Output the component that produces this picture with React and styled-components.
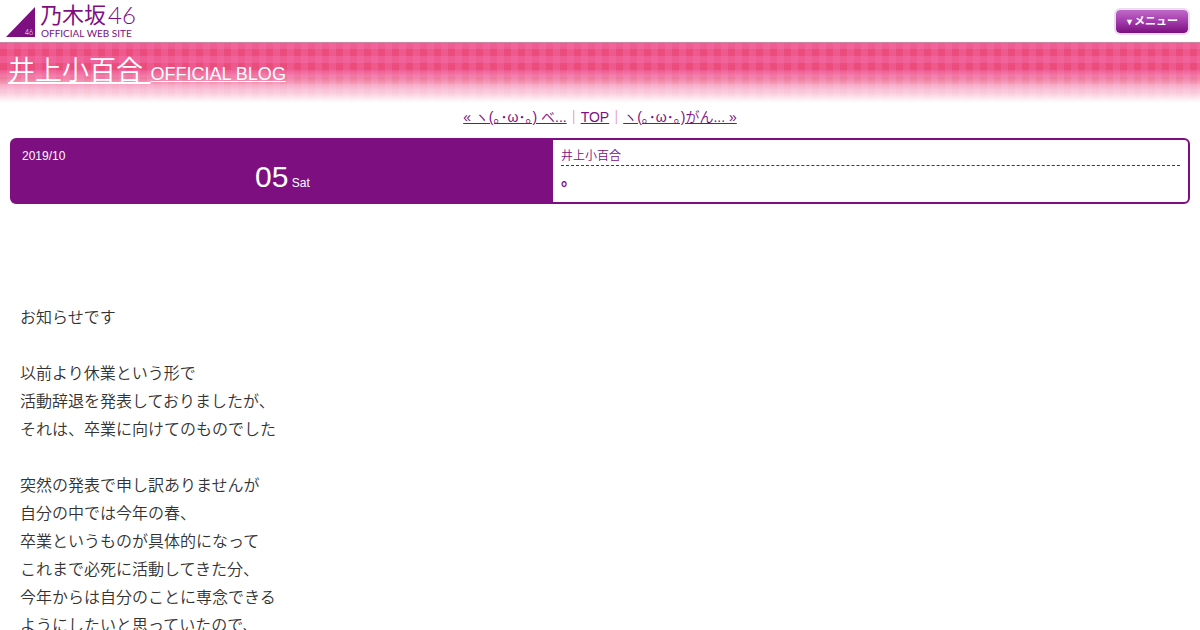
import styled, { createGlobalStyle } from 'styled-components';

const GlobalStyle = createGlobalStyle`
  body{
    margin:0;
    background:#fff;
    color:#333;
    font-family:"Liberation Sans","Noto Sans CJK JP",sans-serif;
    font-size:16px;
    font-weight:350;
  }
  a{
    color:#7d0f80;
  }
`

const Header = styled.header`
display:flex;
justify-content:space-between;
align-items:flex-start;
height:42px;
box-sizing:border-box;
padding:4px 10px 0 5px;
`

const LogoLink = styled.a`
display:block;
svg{
  display:block;
}
`

const MenuButton = styled.button`
margin-top:4px;
height:27px;
padding:0 10px 0 9px;
border:2px solid #ecdcf0;
border-radius:6px;
background:linear-gradient(#c069c8, #a23bab 50%, #7d0f80);
background-clip:padding-box;
color:#fff;
font-family:inherit;
font-size:11px;
font-weight:bold;
line-height:1;
cursor:pointer;
span{
  font-size:9px;
}
`

const BlogTitle = styled.h1`
margin:0;
padding:10px 8px 0;
height:62px;
box-sizing:border-box;
border-top:1px solid #c9879f;
background:
  linear-gradient(rgba(255,255,255,0) 45%, rgba(255,255,255,.5) 70%, #fff 98%),
  repeating-linear-gradient(90deg, rgba(245,110,170,0) 0 7px, rgba(245,110,170,.4) 7px 14px),
  repeating-linear-gradient(#ee5c92 0 6px, #ea4c7b 6px 13px, #ee5c92 13px 14px);
font-size:27px;
font-weight:inherit;
line-height:36px;
a{
  color:#fff;
  text-decoration:none;
}
span,
small{
  text-decoration:underline;
}
small{
  font-size:18px;
}
`

const PageNav = styled.nav`
padding:4px 0 6px;
color:#e0506e;
font-size:14px;
line-height:18px;
text-align:center;
`

const EntryHead = styled.div`
display:flex;
margin:6px 10px 0;
border:2px solid #7d0f80;
border-radius:6px;
color:#7d0f80;
font-size:12px;
`

const EntryDate = styled.div`
width:46%;
box-sizing:border-box;
padding:8px 10px 11px;
background:#7d0f80;
color:#fff;
line-height:16px;
`

const Day = styled.div`
text-align:center;
strong{
  font-size:30px;
  font-weight:inherit;
  line-height:26px;
}
`

const EntryInfo = styled.div`
flex:1;
padding:7px 8px;
`

const Author = styled.div`
border-bottom:1px dashed #7d0f80;
line-height:18px;
`

const EntryTitle = styled.h2`
margin:4px 0 0;
font-size:16px;
line-height:20px;
`

const EntryBody = styled.div`
padding:100px 20px 20px;
line-height:28px;
p{
  margin:0 0 28px;
}
`

function Logo(){
  return (
    <svg width="140" height="38" viewBox="0 0 140 38" role="img" aria-label="乃木坂46 OFFICIAL WEB SITE">
      <path d="M30 3 V33 H1 Z" fill="#7d0f80"/>
      <text x="20" y="31" fontSize="7" fill="#fff" fontFamily="Lato, sans-serif">46</text>
      <g fill="#7d0f80">
        <text x="35" y="19" fontSize="22" fontFamily="'Noto Sans CJK JP', sans-serif" fontWeight="400">乃木坂</text>
        <text x="103" y="20" fontSize="24" fontFamily="Lato, sans-serif" fontWeight="300">46</text>
        <text x="36" y="33" fontSize="10" fontFamily="Lato, sans-serif" fontWeight="400">OFFICIAL WEB SITE</text>
      </g>
    </svg>
  )
}

const paragraphs = [
  ['お知らせです'],
  ['以前より休業という形で', '活動辞退を発表しておりましたが、', 'それは、卒業に向けてのものでした'],
  [
    '突然の発表で申し訳ありませんが',
    '自分の中では今年の春、',
    '卒業というものが具体的になって',
    'これまで必死に活動してきた分、',
    '今年からは自分のことに専念できる',
    'ようにしたいと思っていたので、',
  ],
];

export default function App(){
  return (
    <>
      <GlobalStyle/>
      <Header>
        <LogoLink href="#"><Logo/></LogoLink>
        <MenuButton type="button"><span>▼</span>メニュー</MenuButton>
      </Header>
      <BlogTitle><a href="#"><span>井上小百合 </span><small>OFFICIAL BLOG</small></a></BlogTitle>
      <PageNav>
        <a href="#">« ヽ(｡･ω･｡) ベ...</a>｜<a href="#">TOP</a>｜<a href="#">ヽ(｡･ω･｡)がん... »</a>
      </PageNav>
      <EntryHead>
        <EntryDate>
          2019/10
          <Day><strong>05</strong> Sat</Day>
        </EntryDate>
        <EntryInfo>
          <Author>井上小百合</Author>
          <EntryTitle>。</EntryTitle>
        </EntryInfo>
      </EntryHead>
      <EntryBody>
        {paragraphs.map((lines, i)=>(
          <p key={i}>
            {lines.map((line)=><span key={line}>{line}<br/></span>)}
          </p>
        ))}
      </EntryBody>
    </>
  )
}
